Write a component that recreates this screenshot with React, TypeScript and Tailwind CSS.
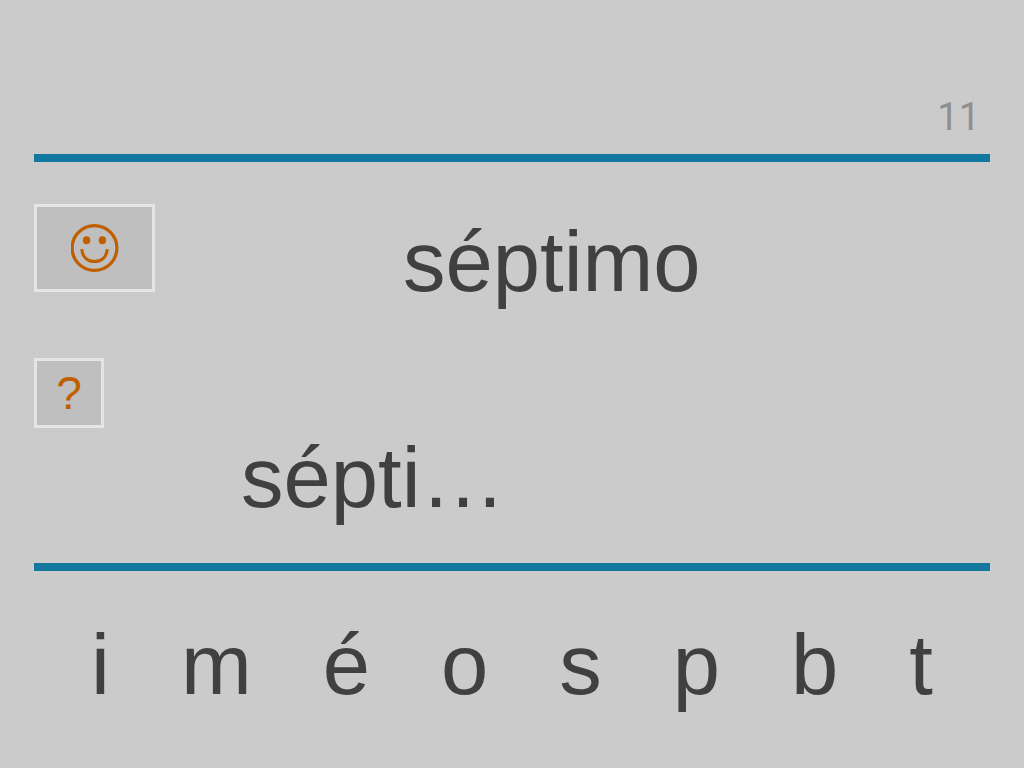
const letters = ["i", "m", "é", "o", "s", "p", "b", "t"];

const App = () => {
  return (
    <main className="min-h-screen bg-[#cbcbcb] px-[34px] pt-[92px] font-['Liberation_Sans',Arial,sans-serif] text-[#404040]">
      <header className="flex h-[70px] justify-end border-b-8 border-[#12789d] pr-2.5">
        <span className="font-[Roboto,sans-serif] text-[38px] leading-[50px] text-[#8f8f8f]">
          11
        </span>
      </header>

      <section className="flex h-[196px] items-start pt-[42px]">
        <button
          type="button"
          aria-label="Smile"
          className="flex h-[88px] w-[121px] shrink-0 items-center justify-center border-3 border-[#e5e5e5] bg-[#bfbfbf] text-[#c05f00]"
        >
          <svg viewBox="0 0 48 48" className="h-12 w-12" fill="none">
            <circle cx="23.5" cy="24" r="22.4" stroke="currentColor" strokeWidth="3.2" />
            <ellipse cx="15.6" cy="16.2" rx="3.7" ry="4" fill="currentColor" />
            <ellipse cx="31.4" cy="16.2" rx="3.7" ry="4" fill="currentColor" />
            <path
              d="M10.8 25.2C11.2 33 16.5 37.6 23.5 37.6S35.8 33 36.2 25.2"
              stroke="currentColor"
              strokeWidth="3"
            />
          </svg>
        </button>
        <h1 className="grow pl-[248px] text-[85px] leading-[116px]">séptimo</h1>
      </section>

      <section className="flex h-[213px] items-start border-b-8 border-[#12789d]">
        <button
          type="button"
          aria-label="?"
          className="flex h-[70px] w-[70px] shrink-0 items-center justify-center border-3 border-[#e5e5e5] bg-[#bfbfbf] text-[46px] text-[#c05f00]"
        >
          ?
        </button>
        <p className="pl-[137px] pt-[62px] text-[85px] leading-[116px]">sépti…</p>
      </section>

      <ul className="flex justify-center gap-[71px] pt-[36px] text-[85px] leading-[116px]">
        {letters.map((letter) => (
          <li key={letter}>{letter}</li>
        ))}
      </ul>
    </main>
  );
};

export default App;
